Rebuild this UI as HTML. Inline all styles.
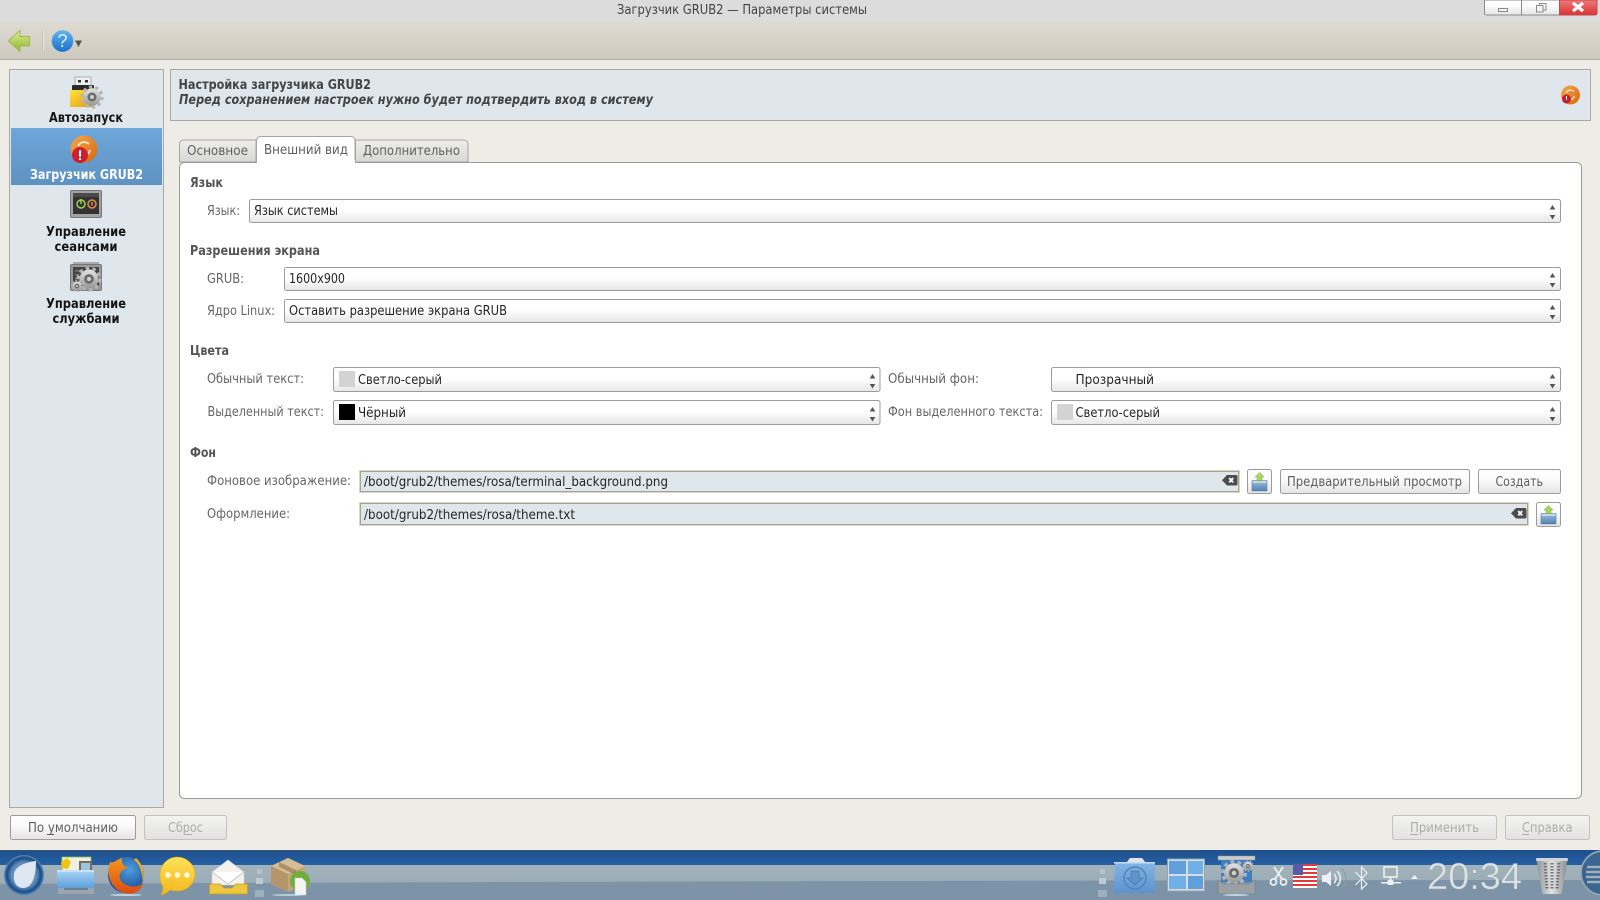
<!DOCTYPE html>
<html><head><meta charset="utf-8"><style>
html,body{margin:0;padding:0;width:1600px;height:900px;overflow:hidden;background:#edece7}
svg{display:block}
text{font-family:"DejaVu Sans","Liberation Sans",sans-serif;font-size:13px}
.b{font-weight:bold}
.l{fill:#666}
.h{fill:#555;font-weight:bold}
.v{fill:#262626}
.t{fill:#5f5f5f}
.d{fill:#adadad}
.s{fill:#151515;font-weight:bold}
</style></head><body>
<svg width="1600" height="900" viewBox="0 0 1600 900" xmlns="http://www.w3.org/2000/svg">
<defs>
<linearGradient id="tb" x1="0" y1="0" x2="0" y2="1"><stop offset="0" stop-color="#dedbd2"/><stop offset="1" stop-color="#cdc9be"/></linearGradient>
<linearGradient id="sel" x1="0" y1="0" x2="0" y2="1"><stop offset="0" stop-color="#6ea7da"/><stop offset="1" stop-color="#5e92c1"/></linearGradient>
<linearGradient id="cb" x1="0" y1="0" x2="0" y2="1"><stop offset="0" stop-color="#ffffff"/><stop offset=".45" stop-color="#ffffff"/><stop offset="1" stop-color="#e6e6e6"/></linearGradient>
<linearGradient id="btn" x1="0" y1="0" x2="0" y2="1"><stop offset="0" stop-color="#ffffff"/><stop offset=".4" stop-color="#fbfbfb"/><stop offset="1" stop-color="#e4e4e4"/></linearGradient>
<linearGradient id="dis" x1="0" y1="0" x2="0" y2="1"><stop offset="0" stop-color="#f3f3f1"/><stop offset="1" stop-color="#e2e2e0"/></linearGradient>
<linearGradient id="tab" x1="0" y1="0" x2="0" y2="1"><stop offset="0" stop-color="#eeeeec"/><stop offset="1" stop-color="#d8d8d6"/></linearGradient>
<linearGradient id="close" x1="0" y1="0" x2="0" y2="1"><stop offset="0" stop-color="#ef7a7a"/><stop offset="1" stop-color="#dc3236"/></linearGradient>
<linearGradient id="blue" x1="0" y1="0" x2="0" y2="1"><stop offset="0" stop-color="#1f4f8c"/><stop offset=".35" stop-color="#2563a8"/><stop offset="1" stop-color="#2b6aae"/></linearGradient>
<linearGradient id="pan" x1="0" y1="0" x2="0" y2="1"><stop offset="0" stop-color="#a3b3bb"/><stop offset="1" stop-color="#93a6b2"/></linearGradient>
<linearGradient id="arrow" x1="0" y1="0" x2="0" y2="1"><stop offset="0" stop-color="#e2ee9a"/><stop offset="1" stop-color="#8cb52c"/></linearGradient>
<linearGradient id="help" x1="0" y1="0" x2="0" y2="1"><stop offset="0" stop-color="#63b4ef"/><stop offset="1" stop-color="#1b70cc"/></linearGradient>
<linearGradient id="org" x1="0" y1="0" x2="1" y2="1"><stop offset="0" stop-color="#f4a850"/><stop offset="1" stop-color="#d8660c"/></linearGradient>
<linearGradient id="yel" x1="0" y1="0" x2="1" y2="1"><stop offset="0" stop-color="#ffe23c"/><stop offset="1" stop-color="#e29b10"/></linearGradient>
<linearGradient id="grey" x1="0" y1="0" x2="0" y2="1"><stop offset="0" stop-color="#e4e4e4"/><stop offset="1" stop-color="#969696"/></linearGradient>
<linearGradient id="fold" x1="0" y1="0" x2="0" y2="1"><stop offset="0" stop-color="#a6d3f5"/><stop offset="1" stop-color="#5e9fdc"/></linearGradient>
<linearGradient id="dl" x1="0" y1="0" x2="0" y2="1"><stop offset="0" stop-color="#8bbbe8"/><stop offset="1" stop-color="#5b93cf"/></linearGradient>
<linearGradient id="chat" x1="0" y1="0" x2="0" y2="1"><stop offset="0" stop-color="#ffe25a"/><stop offset="1" stop-color="#f4b71c"/></linearGradient>
<linearGradient id="trash" x1="0" y1="0" x2="1" y2="0"><stop offset="0" stop-color="#8c8f91"/><stop offset=".5" stop-color="#e2e4e5"/><stop offset="1" stop-color="#85888a"/></linearGradient>
<linearGradient id="ffo" x1="0" y1="0" x2="0" y2="1"><stop offset="0" stop-color="#f39a1e"/><stop offset="1" stop-color="#dd4a12"/></linearGradient>
<linearGradient id="fb" x1="0" y1="0" x2="0" y2="1"><stop offset="0" stop-color="#9fc2e0"/><stop offset="1" stop-color="#4f7fb0"/></linearGradient>
<radialGradient id="orb" cx=".5" cy=".5" r=".5"><stop offset="0" stop-color="#a6c0d9"/><stop offset=".65" stop-color="#5a88b5"/><stop offset=".85" stop-color="#174a86"/><stop offset="1" stop-color="#5a8abb"/></radialGradient>
<radialGradient id="ff" cx=".6" cy=".35" r=".6"><stop offset="0" stop-color="#4da0dc"/><stop offset="1" stop-color="#1c4f9c"/></radialGradient>
<g id="up"><path d="M0 4.500 2.800 0 5.600 4.500Z" fill="#555"/></g>
<g id="dn"><path d="M0 0 5.600 0 2.800 4.500Z" fill="#555"/></g>
<g id="clr"><path d="M5 0H14a1.500 1.500 0 0 1 1.500 1.500V9a1.500 1.500 0 0 1-1.500 1.500H5L0 5.200Z" fill="#4a4c4e"/><path d="M7.200 3 11.200 7.400M11.200 3 7.200 7.400" stroke="#fff" stroke-width="1.800"/></g>
<g id="fo"><path d="M-8 3.500H7V14H-8Z" fill="url(#fb)" stroke="#5b7a9b" stroke-width=".6"/><rect x="-7.500" y="4" width="14" height="2" fill="#c5d8e8"/><path d="M-.5 -4.500-5 0-3 0-3 3.500H2V0H4Z" fill="#a8d65a" stroke="#7ca83a" stroke-width=".5"/></g>
<g id="gear"><circle r="7" fill="url(#grey)"/><circle r="8" fill="none" stroke="#b4b4b4" stroke-width="2.600" stroke-dasharray="2.600 2.400"/><circle r="3.600" fill="#6a6a6a"/><circle r="1.600" fill="#cfcfcf"/></g>
</defs>

<!-- title bar -->
<rect width="1600" height="22" fill="#dcdcdc"/>
<text x="617" y="14" textLength="250" lengthAdjust="spacingAndGlyphs" fill="#444">Загрузчик GRUB2 — Параметры системы</text>
<path d="M1484.500 0V13a2 2 0 0 0 2 2H1595a2 2 0 0 0 2-2V0Z" fill="url(#btn)" stroke="#8c8c8c"/>
<path d="M1521.500 0V15" stroke="#8c8c8c"/>
<path d="M1559.500 0V15H1595a2 2 0 0 0 2-2V0Z" fill="url(#close)" stroke="#c24a4a"/>
<rect x="1498.500" y="8.500" width="9" height="3" fill="none" stroke="#8a8a8a" stroke-width="1"/>
<rect x="1539.500" y="3.500" width="6.500" height="6.500" fill="none" stroke="#8a8a8a"/><rect x="1536.500" y="5.500" width="6.500" height="6.500" fill="#f4f4f4" stroke="#8a8a8a"/>
<path d="M1573 3 1583 11M1583 3 1573 11" stroke="#fff" stroke-width="3.200"/>

<!-- toolbar -->
<rect y="22" width="1600" height="38" fill="url(#tb)"/>
<rect y="59" width="1600" height="1" fill="#b3b1a9"/>
<path d="M8.500 41 20 30.500V36.500H29.500V46H20V51.500Z" fill="url(#arrow)" stroke="#a0b85a"/>
<rect x="42" y="31" width="1" height="20" fill="#c3bfb4"/><rect x="43" y="31" width="1" height="20" fill="#e9e6de"/>
<circle cx="62.500" cy="41" r="10.800" fill="url(#help)"/>
<text x="57.500" y="47" fill="#dff0ff" style="font-family:'Liberation Sans',sans-serif;font-size:18px">?</text>
<path d="M75 40.500H82L78.500 47Z" fill="#555"/>

<!-- sidebar -->
<rect x="9.500" y="69.500" width="154" height="738" fill="#dfe7ed" stroke="#aaa89f"/>
<rect x="11" y="128" width="151" height="57" fill="url(#sel)"/>
<!-- usb -->
<rect x="75" y="77" width="16" height="10" fill="#eee" stroke="#888" stroke-width=".6"/><rect x="78" y="80" width="3" height="2.500" fill="#333"/><rect x="85" y="80" width="3" height="2.500" fill="#333"/>
<rect x="72" y="85" width="22" height="6" rx="1" fill="#2a2a2a"/>
<rect x="70" y="90" width="24" height="17" fill="url(#yel)"/>
<g transform="translate(92 97) scale(1.250)"><use href="#gear"/></g>
<!-- grub -->
<circle cx="84" cy="149" r="13.500" fill="url(#org)"/>
<path d="M78 146a7 7 0 0 1 11-2M90 150a7 7 0 0 1-9 5" fill="none" stroke="#fde8d0" stroke-width="1.800"/>
<circle cx="80" cy="155" r="8" fill="#ce1f30"/>
<rect x="79" y="150" width="2" height="7" fill="#fff"/><rect x="79" y="158" width="2" height="2" fill="#fff"/>
<!-- sessions -->
<rect x="70.500" y="190.500" width="31" height="27" rx="1.500" fill="#a2a2a2" stroke="#777"/>
<rect x="73" y="193" width="26" height="21" fill="#333"/><rect x="73" y="193" width="26" height="4" fill="#4a4a4a"/>
<circle cx="81" cy="204" r="4" fill="none" stroke="#9ad04a" stroke-width="1.500"/><rect x="80.200" y="199" width="1.500" height="5" fill="#9ad04a"/>
<circle cx="92" cy="204" r="4" fill="none" stroke="#e8854a" stroke-width="1.500"/><rect x="91.200" y="202" width="1.500" height="3.500" fill="#e8854a"/>
<!-- services -->
<rect x="73" y="262" width="26" height="4" rx="1" fill="#aaa"/>
<rect x="70.500" y="264.500" width="31" height="26" rx="1.500" fill="#9a9a9a" stroke="#777"/>
<rect x="73" y="267" width="26" height="20" fill="#444"/>
<rect x="75" y="270" width="6" height="1.500" fill="#777"/><rect x="75" y="274" width="4" height="1.500" fill="#777"/><rect x="75" y="278" width="5" height="1.500" fill="#777"/>
<g transform="translate(89 279) scale(1.350)"><use href="#gear"/></g>
<g transform="translate(77 286) scale(.65)"><use href="#gear"/></g>
<text x="49" y="122" textLength="74" lengthAdjust="spacingAndGlyphs" class="s">Автозапуск</text>
<text x="30" y="179" textLength="113" lengthAdjust="spacingAndGlyphs" fill="#fff" class="b">Загрузчик GRUB2</text>
<text x="46" y="236" textLength="80" lengthAdjust="spacingAndGlyphs" class="s">Управление</text>
<text x="54.500" y="251" textLength="63" lengthAdjust="spacingAndGlyphs" class="s">сеансами</text>
<text x="46" y="308" textLength="80" lengthAdjust="spacingAndGlyphs" class="s">Управление</text>
<text x="52.500" y="323" textLength="67" lengthAdjust="spacingAndGlyphs" class="s">службами</text>

<!-- header -->
<rect x="170.500" y="69.500" width="1420" height="51" fill="#dfe7ed" stroke="#aaa89f"/>
<text x="178.500" y="89" textLength="192.500" lengthAdjust="spacingAndGlyphs" fill="#444" class="b">Настройка загрузчика GRUB2</text>
<text x="179" y="104" textLength="474" lengthAdjust="spacingAndGlyphs" fill="#444" class="b" font-style="italic">Перед сохранением настроек нужно будет подтвердить вход в систему</text>
<circle cx="1570.500" cy="95" r="9.500" fill="url(#org)"/>
<path d="M1566 93a5 5 0 0 1 8-1.500M1574.500 96a5 5 0 0 1-6 3.500" fill="none" stroke="#fde8d0" stroke-width="1.300"/>
<circle cx="1566.500" cy="99" r="4.500" fill="#c41f30"/><rect x="1566" y="96" width="1" height="4" fill="#fff"/>

<!-- tabs -->
<path d="M179.500 162V144a4 4 0 0 1 4-4H256V162Z" fill="url(#tab)" stroke="#a5a5a3"/>
<path d="M355.500 162V140H464a4 4 0 0 1 4 4V162Z" fill="url(#tab)" stroke="#a5a5a3"/>
<rect x="179.500" y="162.500" width="1402" height="636" rx="5" fill="#fff" stroke="#9a9a98"/>
<path d="M256.500 163V140.500a4 4 0 0 1 4-4H351a4 4 0 0 1 4 4V163" fill="#fff" stroke="#a5a5a3"/>
<rect x="257" y="160" width="98" height="4" fill="#fff"/>
<text x="187" y="155" textLength="61" lengthAdjust="spacingAndGlyphs" class="t">Основное</text>
<text x="264" y="154" textLength="84" lengthAdjust="spacingAndGlyphs" class="t">Внешний вид</text>
<text x="363" y="155" textLength="97" lengthAdjust="spacingAndGlyphs" class="t">Дополнительно</text>

<!-- section headings -->
<text x="190" y="187" textLength="33" lengthAdjust="spacingAndGlyphs" class="h">Язык</text>
<text x="190" y="255" textLength="130" lengthAdjust="spacingAndGlyphs" class="h">Разрешения экрана</text>
<text x="190" y="355" textLength="39" lengthAdjust="spacingAndGlyphs" class="h">Цвета</text>
<text x="190" y="457" textLength="26" lengthAdjust="spacingAndGlyphs" class="h">Фон</text>

<!-- labels -->
<text x="207" y="215" textLength="33" lengthAdjust="spacingAndGlyphs" class="l">Язык:</text>
<text x="207" y="283" textLength="37" lengthAdjust="spacingAndGlyphs" class="l">GRUB:</text>
<text x="207" y="315" textLength="68" lengthAdjust="spacingAndGlyphs" class="l">Ядро Linux:</text>
<text x="207" y="383" textLength="97" lengthAdjust="spacingAndGlyphs" class="l">Обычный текст:</text>
<text x="207.500" y="416" textLength="116.500" lengthAdjust="spacingAndGlyphs" class="l">Выделенный текст:</text>
<text x="888" y="383" textLength="91" lengthAdjust="spacingAndGlyphs" class="l">Обычный фон:</text>
<text x="888" y="416" textLength="155" lengthAdjust="spacingAndGlyphs" class="l">Фон выделенного текста:</text>
<text x="207" y="485" textLength="144" lengthAdjust="spacingAndGlyphs" class="l">Фоновое изображение:</text>
<text x="207" y="518" textLength="83" lengthAdjust="spacingAndGlyphs" class="l">Оформление:</text>

<!-- combos -->
<rect x="249.500" y="199.500" width="1311" height="23" rx="2" fill="url(#cb)" stroke="#9c9c9a"/>
<rect x="284.500" y="267.500" width="1276" height="23" rx="2" fill="url(#cb)" stroke="#9c9c9a"/>
<rect x="284.500" y="299.500" width="1276" height="23" rx="2" fill="url(#cb)" stroke="#9c9c9a"/>
<rect x="333.500" y="367.500" width="546.500" height="24" rx="2" fill="url(#cb)" stroke="#9c9c9a"/>
<rect x="333.500" y="400.500" width="546.500" height="24" rx="2" fill="url(#cb)" stroke="#9c9c9a"/>
<rect x="1051.500" y="367.500" width="509" height="24" rx="2" fill="url(#cb)" stroke="#9c9c9a"/>
<rect x="1051.500" y="400.500" width="509" height="24" rx="2" fill="url(#cb)" stroke="#9c9c9a"/>
<use href="#up" x="1549.700" y="205"/><use href="#dn" x="1549.700" y="215"/>
<use href="#up" x="1549.700" y="273"/><use href="#dn" x="1549.700" y="283"/>
<use href="#up" x="1549.700" y="305"/><use href="#dn" x="1549.700" y="315"/>
<use href="#up" x="869.700" y="374"/><use href="#dn" x="869.700" y="384"/>
<use href="#up" x="869.700" y="407"/><use href="#dn" x="869.700" y="417"/>
<use href="#up" x="1549.700" y="374"/><use href="#dn" x="1549.700" y="384"/>
<use href="#up" x="1549.700" y="407"/><use href="#dn" x="1549.700" y="417"/>
<rect x="339" y="371" width="16" height="16" fill="#d3d3d3"/>
<rect x="339" y="404" width="16" height="16" fill="#000"/>
<rect x="1057" y="404" width="16" height="16" fill="#d3d3d3"/>
<text x="254" y="215" textLength="84" lengthAdjust="spacingAndGlyphs" class="v">Язык системы</text>
<text x="289" y="283" textLength="56" lengthAdjust="spacingAndGlyphs" class="v">1600x900</text>
<text x="289" y="315" textLength="218" lengthAdjust="spacingAndGlyphs" class="v">Оставить разрешение экрана GRUB</text>
<text x="358" y="384" textLength="84" lengthAdjust="spacingAndGlyphs" class="v">Светло-серый</text>
<text x="358" y="417" textLength="48" lengthAdjust="spacingAndGlyphs" class="v">Чёрный</text>
<text x="1075.500" y="384" textLength="78.500" lengthAdjust="spacingAndGlyphs" class="v">Прозрачный</text>
<text x="1075.500" y="417" textLength="84.500" lengthAdjust="spacingAndGlyphs" class="v">Светло-серый</text>

<!-- line edits -->
<rect x="359.500" y="470.500" width="880" height="22" fill="#e9e6da" stroke="#d8d4c6"/>
<rect x="360.500" y="471.500" width="878" height="20" fill="#dfe7ed" stroke="#a8a490"/>
<rect x="359.500" y="502.500" width="1169" height="23" fill="#e9e6da" stroke="#d8d4c6"/>
<rect x="360.500" y="503.500" width="1167" height="21" fill="#dfe7ed" stroke="#a8a490"/>
<text x="364" y="486" textLength="304" lengthAdjust="spacingAndGlyphs" class="v">/boot/grub2/themes/rosa/terminal_background.png</text>
<text x="364" y="519" textLength="211" lengthAdjust="spacingAndGlyphs" class="v">/boot/grub2/themes/rosa/theme.txt</text>
<use href="#clr" x="1222" y="475"/>
<use href="#clr" x="1511" y="508"/>

<!-- buttons -->
<rect x="1247.500" y="469.500" width="24" height="24" rx="2" fill="url(#btn)" stroke="#9c9c9a"/>
<rect x="1536.500" y="502.500" width="24" height="24" rx="2" fill="url(#btn)" stroke="#9c9c9a"/>
<use href="#fo" x="1260" y="477"/><use href="#fo" x="1549" y="510"/>
<rect x="1280.500" y="469.500" width="189" height="24" rx="2" fill="url(#btn)" stroke="#9c9c9a"/>
<rect x="1478.500" y="469.500" width="82" height="24" rx="2" fill="url(#btn)" stroke="#9c9c9a"/>
<text x="1287" y="486" textLength="175" lengthAdjust="spacingAndGlyphs" class="t">Предварительный просмотр</text>
<text x="1495.500" y="486" textLength="47.500" lengthAdjust="spacingAndGlyphs" class="t">Создать</text>
<rect x="10.500" y="815.500" width="125" height="24" rx="2" fill="url(#btn)" stroke="#9c9c9a"/>
<rect x="144.500" y="815.500" width="82" height="24" rx="2" fill="url(#dis)" stroke="#c2c2c0"/>
<rect x="1392.500" y="815.500" width="104" height="24" rx="2" fill="url(#dis)" stroke="#c2c2c0"/>
<rect x="1505.500" y="815.500" width="84" height="24" rx="2" fill="url(#dis)" stroke="#c2c2c0"/>
<text x="28" y="832" textLength="90" lengthAdjust="spacingAndGlyphs" class="t">По умолчанию</text>
<rect x="47" y="834" width="7" height="1" fill="#5f5f5f"/>
<text x="168" y="832" textLength="35" lengthAdjust="spacingAndGlyphs" class="d">Сброс</text>
<rect x="185" y="834" width="7" height="1" fill="#adadad"/>
<text x="1410" y="832" textLength="69" lengthAdjust="spacingAndGlyphs" class="d">Применить</text>
<rect x="1410" y="834" width="8" height="1" fill="#adadad"/>
<text x="1522" y="832" textLength="50.500" lengthAdjust="spacingAndGlyphs" class="d">Справка</text>
<rect x="1522" y="834" width="7" height="1" fill="#adadad"/>

<!-- panel -->
<rect y="850" width="1600" height="50" fill="url(#blue)"/>
<rect y="865" width="1600" height="35" fill="url(#pan)"/>
<path d="M0 884C400 882 1200 880 1600 880V900H0Z" fill="#7d94a8"/>
<rect y="850" width="1200" height="1" fill="#5f5a50" opacity=".5"/>

<!-- orb -->
<circle cx="24" cy="875" r="20" fill="url(#orb)"/>
<path d="M14 875C14 867 25 862 36 861 36 872 34 888 23 888 17 888 13 882 14 875Z" fill="#dfe8f0"/>
<!-- folder app -->
<rect x="62" y="857" width="29" height="14" fill="#eef0e2" stroke="#7fb84a" stroke-width=".8"/>
<rect x="79" y="861" width="13" height="11" fill="#7a6a58"/><rect x="81" y="863" width="9" height="7" fill="#9fc4e0"/>
<path d="M61 862 67 858 71 862 68 869 62 868Z" fill="#f1c40f"/>
<path d="M57 871H94V888H57Z" fill="url(#fold)"/><rect x="57" y="870" width="37" height="2" fill="#c7e2f7"/>
<rect x="58" y="888" width="36" height="6" fill="#9aa6ae"/><rect x="64" y="888" width="24" height="2" fill="#6f8191"/>
<!-- firefox -->
<circle cx="126" cy="875" r="18" fill="url(#ff)"/>
<path d="M110 862C106 872 109 888 124 893 136 896 142 889 144 882 140 888 128 888 122 882 116 875 122 869 128 868 124 866 121 864 122 858 116 860 113 864 110 862Z" fill="url(#ffo)"/>
<path d="M136 858C143 864 145 874 143 882 142 872 140 864 134 860Z" fill="#f2a71e"/>
<ellipse cx="126" cy="895" rx="16" ry="1" fill="#cfe8f5" opacity=".8"/>
<!-- chat -->
<path d="M177 857C187 857 195 865 195 874 195 884 187 891 177 891 174 891 172 890.500 170 890 168 892 165 894 161 895 163 892 163 889 163 886 160 883 160 878 160 874 160 865 168 857 177 857Z" fill="url(#chat)" stroke="#e0a616" stroke-width=".6"/>
<circle cx="168" cy="875" r="2.800" fill="#fff8d8"/><circle cx="177.500" cy="875" r="2.800" fill="#fff8d8"/><circle cx="187" cy="875" r="2.800" fill="#fff8d8"/>
<!-- mail -->
<path d="M212 872 228 860 244 872V885H212Z" fill="#f4f2ee" stroke="#cfcfcf" stroke-width=".6"/>
<path d="M212 872 228 884 244 872" fill="#fff" stroke="#c2c2c2" stroke-width=".8"/>
<path d="M209.500 884H220L224 888H232L236 884H247.500V894H209.500Z" fill="#edc73f" stroke="#c6a023" stroke-width=".8"/>
<!-- dots -->
<rect x="257" y="869" width="5" height="5" fill="#b5c3cb"/><rect x="256" y="878" width="7" height="6" fill="#bccad1"/><rect x="255" y="890" width="9" height="7" fill="#9eb0bc"/>
<!-- box -->
<path d="M271 866 288 858 305 866V884L288 892 271 884Z" fill="#c2a57a"/>
<path d="M271 866 288 874 305 866 288 858Z" fill="#d6bd94"/><path d="M288 874V892L271 884V866Z" fill="#b5966a"/><path d="M279 862 296 870V875L279 867Z" fill="#8d7350" opacity=".6"/>
<circle cx="300" cy="881" r="10" fill="#6faf3a"/>
<path d="M295 878H302L306 882V895H295Z" fill="#f4f4f4" stroke="#ccc" stroke-width=".5"/>
<ellipse cx="288" cy="895" rx="16" ry="1" fill="#cfe8f5" opacity=".7"/>

<!-- right dots -->
<rect x="1100" y="869" width="5" height="5" fill="#b5c3cb"/><rect x="1099" y="878" width="7" height="6" fill="#bccad1"/><rect x="1098" y="890" width="9" height="7" fill="#9eb0bc"/>
<!-- download folder -->
<path d="M1115 862H1127L1130 858H1142L1145 862H1155V890A2 2 0 0 1 1153 893H1117A2 2 0 0 1 1114 890Z" fill="url(#dl)"/>
<path d="M1127 862 1130 858H1142L1145 862Z" fill="#dfe4e8"/>
<rect x="1114" y="862" width="41" height="1.500" fill="#c9dcef"/>
<circle cx="1135" cy="878" r="11" fill="none" stroke="#4e85bd" stroke-width="1.500"/>
<path d="M1131 871H1139V878H1143L1135 885 1127 878H1131Z" fill="#5f93c9" stroke="#4478af" stroke-width=".7"/>
<!-- windows -->
<rect x="1167.500" y="859" width="37" height="32" fill="#d8dde0" stroke="#9aa3a8"/>
<rect x="1169" y="861" width="17" height="13" fill="#5fa0dc"/><rect x="1188" y="861" width="15" height="13" fill="#6fb0e6"/><rect x="1169" y="876" width="17" height="13" fill="#6fb0e6"/><rect x="1188" y="876" width="15" height="13" fill="#5fa0dc"/>
<!-- settings -->
<rect x="1218" y="856" width="37" height="4" fill="#c9cdd0" stroke="#8a8f93" stroke-width=".5"/>
<rect x="1221" y="860" width="31" height="22" fill="#3f7fc0"/>
<g transform="translate(1234 873) scale(1.400)"><use href="#gear"/></g>
<g transform="translate(1248 866) scale(.6)"><use href="#gear"/></g>
<path d="M1218 880 1224 884H1249L1255 880V894H1218Z" fill="#9aa0a4" stroke="#777d82" stroke-width=".6"/>
<ellipse cx="1236" cy="895" rx="13" ry="1" fill="#cfe8f5" opacity=".8"/>
<!-- scissors -->
<g fill="none" stroke="#eef1f3" stroke-width="1.800"><circle cx="1273.500" cy="882" r="3"/><circle cx="1283.500" cy="882" r="3"/><path d="M1275 879 1283 867M1282 879 1274 867"/></g>
<!-- flag -->
<rect x="1293" y="864" width="24" height="24" fill="#fff"/>
<g fill="#e23a3a"><rect x="1293" y="864" width="24" height="2"/><rect x="1293" y="868" width="24" height="2"/><rect x="1293" y="872" width="24" height="2"/><rect x="1293" y="876" width="24" height="2"/><rect x="1293" y="880" width="24" height="2"/><rect x="1293" y="884" width="24" height="2"/></g>
<rect x="1293" y="864" width="10" height="11" fill="#5a5aa8"/>
<!-- speaker -->
<path d="M1322 875H1326L1331 871V886L1326 882H1322Z" fill="#eef1f3"/>
<path d="M1334 874a6 6 0 0 1 0 9M1337 871a10 10 0 0 1 0 15" fill="none" stroke="#eef1f3" stroke-width="1.500"/>
<path d="M1341 868a14 14 0 0 1 0 21" fill="none" stroke="#8b9da9" stroke-width="1"/>
<!-- bluetooth -->
<path d="M1355.500 872 1367 884 1361.500 889V867L1367 873 1355.500 885" fill="none" stroke="#eef1f3" stroke-width="1.200"/>
<!-- network -->
<rect x="1384" y="867" width="13" height="10" fill="none" stroke="#eef1f3" stroke-width="1.600"/>
<rect x="1389.500" y="877" width="2" height="5" fill="#eef1f3"/><rect x="1381" y="882" width="20" height="1.500" fill="#eef1f3"/><rect x="1387.500" y="880" width="6" height="5" rx="1" fill="#eef1f3"/>
<path d="M1411 879 1414.500 875 1418 879Z" fill="#eef1f3"/>
<!-- clock -->
<text x="1427" y="889" textLength="95" lengthAdjust="spacingAndGlyphs" fill="#dde2e5" stroke="#8ea2af" stroke-width=".4" style="font-family:'Liberation Sans',sans-serif;font-size:37px">20:34</text>
<!-- trash -->
<path d="M1536 858H1568L1562 892A2 2 0 0 1 1560 894H1544A2 2 0 0 1 1542 892Z" fill="url(#trash)"/>
<rect x="1536" y="858" width="32" height="3" rx="1.500" fill="#d2d5d7"/>
<path d="M1545 863 1547 890M1552 863V890M1559 863 1557 890" stroke="#6d7174" stroke-width="3" stroke-dasharray="1.500 1.500" fill="none"/>
<!-- right button -->
<circle cx="1603" cy="873" r="22" fill="#3a6690" stroke="#9aaab4" stroke-width="1.500"/>
<path d="M1587 867H1600M1586 872H1600M1586 877H1600M1587 882H1600" stroke="#9fb0bb" stroke-width="2.500"/>
</svg>
</body></html>
